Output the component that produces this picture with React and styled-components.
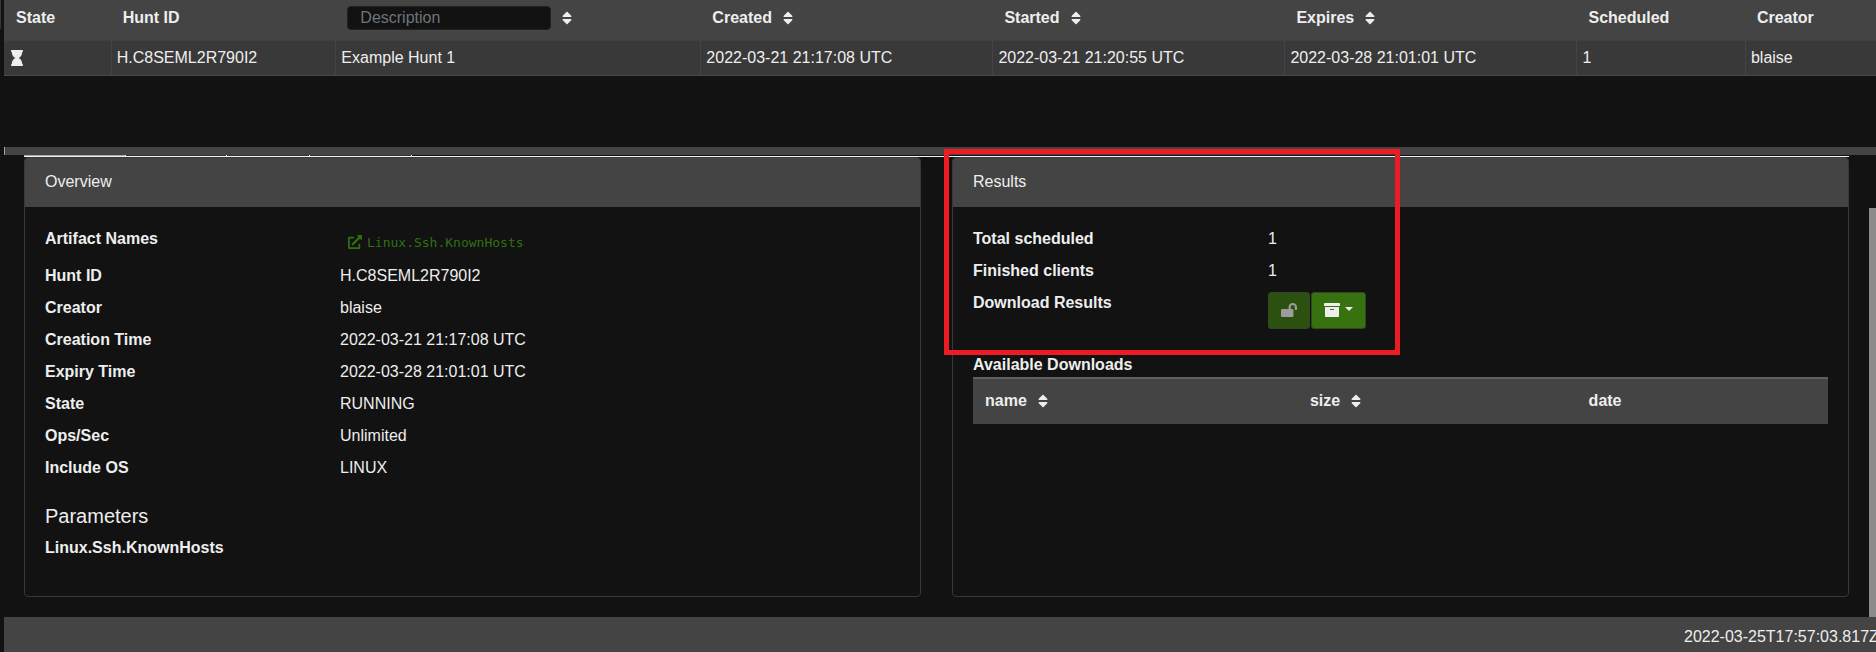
import React from "react";
import styled, { createGlobalStyle } from "styled-components";
import {
  FaArchive,
  FaExternalLinkAlt,
  FaHourglass,
  FaLockOpen,
  FaSort,
} from "react-icons/fa";

const GlobalStyle = createGlobalStyle`
  *, *::before, *::after { box-sizing: border-box; }
  body {
    margin: 0;
    background: #121212;
    color: #eeeeee;
    font: 16px/24px "Liberation Sans", Arial, sans-serif;
  }
`;

const Page = styled.div`
  display: flex;
  min-height: 100vh;
  overflow: hidden;
`;

const SidebarEdge = styled.div`
  flex: none;
  width: 1px;
  height: 29px;
  margin-right: 3px;
  background: #383838;
`;

const Workspace = styled.div`
  flex: 1;
  min-width: 0;
  display: flex;
  flex-direction: column;
`;

const HuntPane = styled.section`
  min-height: 147px;
`;

const Table = styled.table`
  width: 100%;
  table-layout: fixed;
  border-collapse: separate;
  border-spacing: 0;
`;

const Col = styled.col`
  width: ${(p) => p.$width};
`;

const HuntHeader = styled.th`
  height: 41px;
  padding: 0 12px 4px;
  background: #444444;
  border-bottom: 1px solid #404040;
  text-align: left;
  white-space: nowrap;
`;

const HeaderLabel = styled.div`
  display: flex;
  align-items: center;
  gap: 8px;
`;

const SortButton = styled.button`
  display: flex;
  padding: 0;
  border: 0;
  background: none;
  color: inherit;
  font-size: 16px;
`;

const HuntCell = styled.td`
  height: 35px;
  padding: 0 5px;
  background: #393939;
  border-bottom: 1px solid #4a4a4a;
  white-space: nowrap;

  & + & {
    border-left: 1px solid #444444;
  }
`;

const StateIcon = styled(FaHourglass)`
  display: block;
`;

const FilterInput = styled.input`
  width: 204px;
  height: 24px;
  padding: 0 12px;
  border: 1px solid #222222;
  border-radius: 4px;
  background: #121212;
  color: #eeeeee;
  font: inherit;
  font-weight: normal;

  &::placeholder {
    color: #6c757d;
    opacity: 1;
  }
`;

const Divider = styled.div`
  height: 8px;
  background: #444444;
  border-left: 1px solid #a0a0a0;
`;

const DetailPane = styled.section`
  flex: 1;
  display: flex;
`;

const DetailContent = styled.div`
  flex: 1;
  min-width: 0;
  display: flex;
  flex-direction: column;
  padding: 0 20px;
  padding-bottom: 20px;
`;

const TabEdges = styled.div`
  display: flex;
  height: 2px;
  border-bottom: 1px solid #f2f2f2;
`;

const TabEdge = styled.span`
  width: ${(p) => p.$width};
  background: ${(p) => (p.$active ? "#a8a8a8" : "#333333")};
  border-right: 1px solid #f2f2f2;
`;

const Cards = styled.div`
  flex: 1;
  display: grid;
  grid-template-columns: 1fr 1fr;
  gap: 31px;
`;

const Card = styled.article`
  position: relative;
  border: 1px solid #383838;
  border-radius: 4px;
`;

const CardHeader = styled.header`
  padding: 12px 20px 13px;
  background: #444444;
  border-radius: 3px 3px 0 0;
`;

const CardBody = styled.div`
  padding: 20px;
`;

const Facts = styled.dl`
  display: grid;
  grid-template-columns: 295fr 560fr;
  row-gap: 8px;
  margin: 0;
`;

const Term = styled.dt`
  font-weight: bold;
`;

const Value = styled.dd`
  margin: 0;
`;

const ArtifactLink = styled.a`
  display: inline-flex;
  align-items: center;
  gap: 5px;
  height: 29px;
  padding: 1px 8px 0;
  color: #30700f;
  font: 13px "DejaVu Sans Mono", monospace;
  text-decoration: none;
  vertical-align: top;
`;

const SectionTitle = styled.h2`
  margin: 24px 0 8px;
  font-size: 20px;
  font-weight: normal;
`;

const StrongLine = styled.h3`
  margin: ${(p) => (p.$spaced ? "24px 0 0" : "0")};
  font-size: 16px;
  line-height: 24px;
`;

const ButtonGroup = styled.div`
  display: flex;
  gap: 1px;
  padding-top: 1px;
`;

const ActionButton = styled.button`
  display: flex;
  align-items: center;
  gap: 5px;
  height: 37px;
  padding: 0 12px 2px;
  border: 1px solid #2d4a1e;
  border-radius: 3px;
  background: #38710f;
  color: #eeeeee;
  font-size: 16px;

  &:disabled {
    background: #2b5010;
    color: #9c9c9c;
  }
`;

const Caret = styled.span`
  margin-top: -2px;
  border-top: 4px solid currentColor;
  border-left: 4px solid transparent;
  border-right: 4px solid transparent;
`;

const DownloadHeader = styled.th`
  height: 47px;
  padding: 0 12px 2px;
  background: #444444;
  border-top: 2px solid #606060;
  text-align: left;
`;

const Highlight = styled.div`
  position: absolute;
  z-index: 2;
  top: -9px;
  left: -9px;
  width: 51%;
  height: 206px;
  border: 5px solid #ed1c24;
  pointer-events: none;
`;

const ScrollTrack = styled.div`
  display: flex;
  width: 7px;
  padding-top: 53px;
`;

const ScrollThumb = styled.div`
  flex: 1;
  background: #8b8b8b;
`;

const Footer = styled.footer`
  display: flex;
  height: 35px;
  padding-top: 8px;
  background: #444444;
  white-space: nowrap;
`;

const Clock = styled.time`
  flex: none;
  width: 192px;
  margin-left: auto;
`;

const huntColumns = [
  { label: "State", width: "5.7%" },
  { label: "Hunt ID", width: "12%" },
  { label: "Description", width: "19.5%", filter: true, sort: true },
  { label: "Created", width: "15.6%", sort: true },
  { label: "Started", width: "15.6%", sort: true },
  { label: "Expires", width: "15.6%", sort: true },
  { label: "Scheduled", width: "9%" },
  { label: "Creator", width: "7%" },
];

const hunt = [
  "H.C8SEML2R790I2",
  "Example Hunt 1",
  "2022-03-21 21:17:08 UTC",
  "2022-03-21 21:20:55 UTC",
  "2022-03-28 21:01:01 UTC",
  "1",
  "blaise",
];

const overview = [
  ["Hunt ID", "H.C8SEML2R790I2"],
  ["Creator", "blaise"],
  ["Creation Time", "2022-03-21 21:17:08 UTC"],
  ["Expiry Time", "2022-03-28 21:01:01 UTC"],
  ["State", "RUNNING"],
  ["Ops/Sec", "Unlimited"],
  ["Include OS", "LINUX"],
];

const downloadColumns = [
  { label: "name", width: "38%", sort: true },
  { label: "size", width: "32.6%", sort: true },
  { label: "date", width: "29.4%" },
];

const tabs = [
  { width: "102px", active: true },
  { width: "101px" },
  { width: "83px" },
  { width: "102px" },
];

function ColumnLabel({ label, sort, filter }) {
  return (
    <HeaderLabel>
      {filter ? <FilterInput placeholder={label} aria-label={label} /> : label}
      {sort && (
        <SortButton type="button" aria-label={`Sort by ${label}`}>
          <FaSort />
        </SortButton>
      )}
    </HeaderLabel>
  );
}

function Columns({ columns }) {
  return (
    <colgroup>
      {columns.map((c) => (
        <Col key={c.label} $width={c.width} />
      ))}
    </colgroup>
  );
}

export default function App() {
  return (
    <>
      <GlobalStyle />
      <Page>
        <SidebarEdge />
        <Workspace>
          <HuntPane>
            <Table>
              <Columns columns={huntColumns} />
              <thead>
                <tr>
                  {huntColumns.map((c) => (
                    <HuntHeader key={c.label} scope="col">
                      <ColumnLabel {...c} />
                    </HuntHeader>
                  ))}
                </tr>
              </thead>
              <tbody>
                <tr>
                  <HuntCell>
                    <StateIcon role="img" aria-label="Running" />
                  </HuntCell>
                  {hunt.map((text) => (
                    <HuntCell key={text}>{text}</HuntCell>
                  ))}
                </tr>
              </tbody>
            </Table>
          </HuntPane>
          <Divider />
          <DetailPane>
            <DetailContent>
              <TabEdges>
                {tabs.map((t, i) => (
                  <TabEdge key={i} $width={t.width} $active={t.active} />
                ))}
              </TabEdges>
              <Cards>
                <Card>
                  <CardHeader>Overview</CardHeader>
                  <CardBody>
                    <Facts>
                      <Term>Artifact Names</Term>
                      <Value>
                        <ArtifactLink href="#artifact">
                          <FaExternalLinkAlt size={14} />
                          Linux.Ssh.KnownHosts
                        </ArtifactLink>
                      </Value>
                      {overview.map(([term, value]) => (
                        <React.Fragment key={term}>
                          <Term>{term}</Term>
                          <Value>{value}</Value>
                        </React.Fragment>
                      ))}
                    </Facts>
                    <SectionTitle>Parameters</SectionTitle>
                    <StrongLine>Linux.Ssh.KnownHosts</StrongLine>
                  </CardBody>
                </Card>
                <Card>
                  <CardHeader>Results</CardHeader>
                  <CardBody>
                    <Facts>
                      <Term>Total scheduled</Term>
                      <Value>1</Value>
                      <Term>Finished clients</Term>
                      <Value>1</Value>
                      <Term>Download Results</Term>
                      <Value>
                        <ButtonGroup>
                          <ActionButton type="button" disabled aria-label="Set password">
                            <FaLockOpen />
                          </ActionButton>
                          <ActionButton type="button" aria-label="Prepare download">
                            <FaArchive />
                            <Caret />
                          </ActionButton>
                        </ButtonGroup>
                      </Value>
                    </Facts>
                    <StrongLine $spaced>Available Downloads</StrongLine>
                    <Table>
                      <Columns columns={downloadColumns} />
                      <thead>
                        <tr>
                          {downloadColumns.map((c) => (
                            <DownloadHeader key={c.label} scope="col">
                              <ColumnLabel {...c} />
                            </DownloadHeader>
                          ))}
                        </tr>
                      </thead>
                    </Table>
                  </CardBody>
                  <Highlight />
                </Card>
              </Cards>
            </DetailContent>
            <ScrollTrack>
              <ScrollThumb />
            </ScrollTrack>
          </DetailPane>
          <Footer>
            <Clock>2022-03-25T17:57:03.817Z</Clock>
          </Footer>
        </Workspace>
      </Page>
    </>
  );
}
